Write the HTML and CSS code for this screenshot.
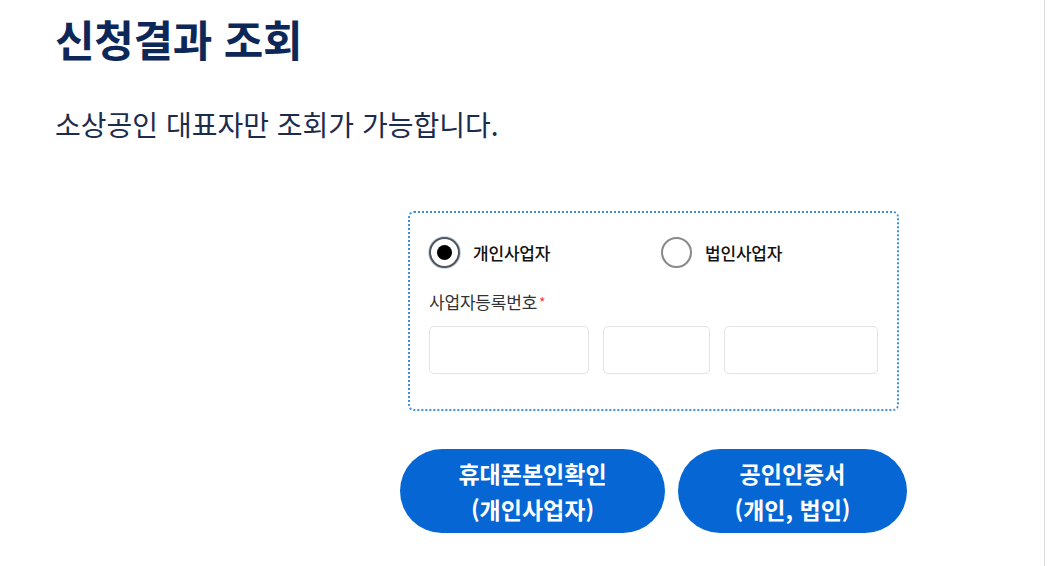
FILE: index.html
```html
<!DOCTYPE html>
<html lang="ko">
<head>
<meta charset="utf-8">
<link rel="stylesheet" href="styles.css">
</head>
<body>
<div class="page">
  <h1 class="title">신청결과 조회</h1>
  <p class="desc">소상공인 대표자만 조회가 가능합니다.</p>
  <div class="form-wrap">
    <div class="box">
      <div class="radios">
        <label class="radio r1"><span class="dot checked"></span><span class="rlabel">개인사업자</span></label>
        <label class="radio r2"><span class="dot"></span><span class="rlabel">법인사업자</span></label>
      </div>
      <div class="field-label">사업자등록번호<span class="req">*</span></div>
      <div class="inputs">
        <div class="inp w1"></div>
        <div class="inp w2"></div>
        <div class="inp w3"></div>
      </div>
    </div>
    <div class="buttons">
      <button class="btn b1">휴대폰본인확인<br>(개인사업자)</button>
      <button class="btn b2">공인인증서<br>(개인, 법인)</button>
    </div>
  </div>
</div>
</body>
</html>
```

FILE: styles.css
```css
html, body {
  margin: 0;
  padding: 0;
  background: #fff;
}
body {
  font-family: "Noto Sans CJK KR", "Noto Sans", sans-serif;
}
.page {
  width: 1045px;
  height: 566px;
  box-sizing: border-box;
  border-right: 1px solid #dcdcdc;
  padding: 10px 0 0 55px;
  background: #fff;
}
.title {
  margin: 0;
  font-size: 43px;
  line-height: 56px;
  font-weight: 700;
  color: #0d2858;
  letter-spacing: -0.3px;
}
.desc {
  margin: 40px 0 0 0;
  font-size: 28px;
  line-height: 36px;
  color: #1c2c4c;
  letter-spacing: 0;
}
.form-wrap {
  margin: 69px 0 0 353px;
  width: 510px;
}
.box {
  width: 491px;
  height: 200px;
  box-sizing: border-box;
  border: 2px dotted #3f8de0;
  border-radius: 6px;
  padding: 21px 19px 0 19px;
}
.radios {
  display: flex;
  align-items: center;
  height: 36px;
}
.radio {
  display: flex;
  align-items: center;
  gap: 13px;
}
.r1 { width: 232px; }
.dot {
  width: 27px;
  height: 27px;
  border: 2px solid #8a8a8a;
  border-radius: 50%;
  display: flex;
  align-items: center;
  justify-content: center;
  background: #fff;
}
.dot.checked {
  border-color: #555;
  box-shadow: 0 0 0 1px #c9dcf2;
}
.dot.checked::after {
  content: "";
  width: 15px;
  height: 15px;
  border-radius: 50%;
  background: #000;
}
.rlabel {
  font-size: 17px;
  color: #111;
  letter-spacing: -0.2px;
  font-weight: 500;
}
.field-label {
  margin-top: 21px;
  font-size: 17px;
  line-height: 22px;
  color: #333;
  letter-spacing: -0.2px;
}
.req {
  color: #e8433c;
  margin-left: 2px;
  font-size: 14px;
  vertical-align: top;
}
.inputs {
  display: flex;
  gap: 14px;
  margin-top: 13px;
}
.inp {
  height: 48px;
  box-sizing: border-box;
  border: 1px solid #e3e3e3;
  border-radius: 5px;
  background: #fff;
}
.w1 { width: 161px; }
.w2 { width: 108px; }
.w3 { width: 155px; }
.buttons {
  display: flex;
  gap: 13px;
  margin: 38px 0 0 -8px;
}
.btn {
  border: none;
  background: #0566d4;
  color: #fff;
  font-family: "Noto Sans CJK KR", "Noto Sans", sans-serif;
  font-size: 23px;
  font-weight: 700;
  line-height: 36px;
  height: 84px;
  border-radius: 42px;
  letter-spacing: 0;
  padding: 0;
}
.b1 { width: 265px; }
.b2 { width: 229px; }
```
